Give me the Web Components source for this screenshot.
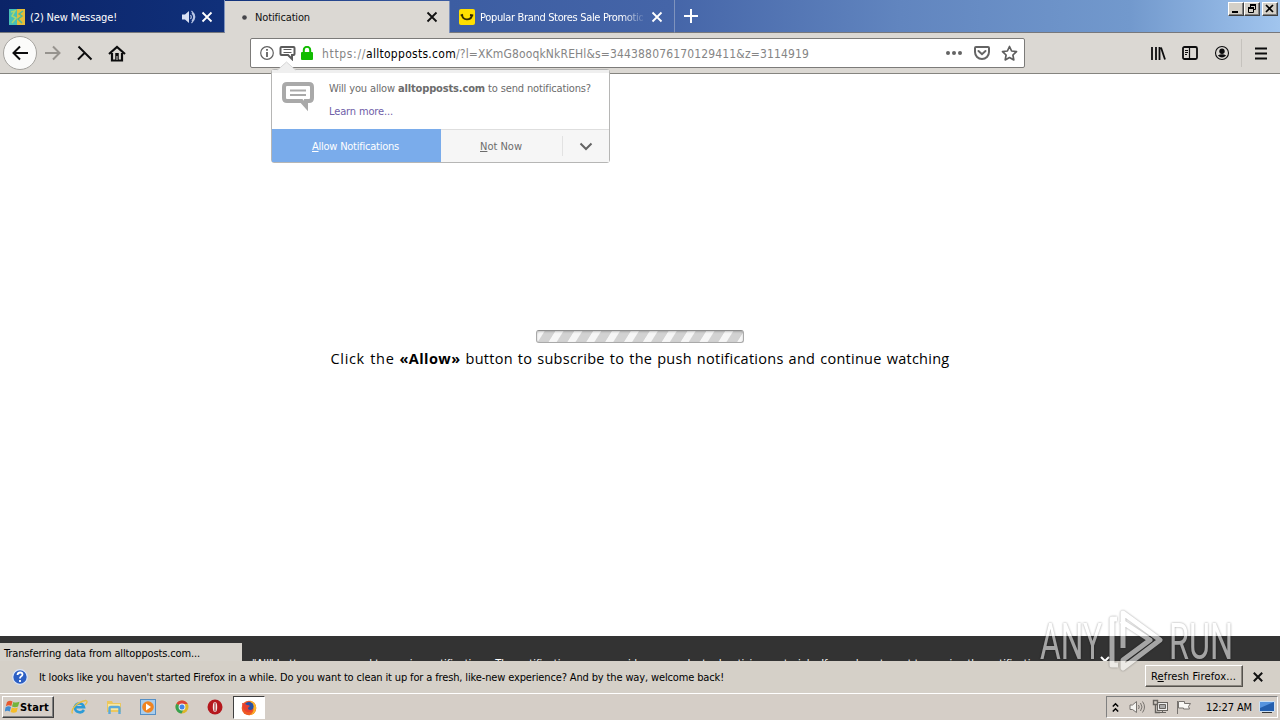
<!DOCTYPE html>
<html lang="en">
<head>
<meta charset="utf-8">
<title>Notification</title>
<style>
  body {
    margin: 0;
    width: 1280px;
    height: 720px;
    overflow: hidden;
    background: #fff;
    font-family: "DejaVu Sans Condensed", "DejaVu Sans", sans-serif;
    font-stretch: condensed;
    font-size: 11px;
    line-height: 14px;
    color: #000;
  }
</style>
</head>
<body>
<desktop-screen></desktop-screen>

<script>
class BaseElement extends HTMLElement {
  constructor() {
    super();
    const template = document.createElement("template");
    template.innerHTML = this.constructor.styles + this.constructor.markup;
    this.attachShadow({ mode: "open" });
    this.shadowRoot.appendChild(template.content.cloneNode(true));
  }
}

/* One line of text, spaced out to the number of pixels in "width". */
class FitText extends BaseElement {
  static get styles() {
    return `<style>
      :host { display: block; flex: none; white-space: nowrap; padding-top: 1px; margin-bottom: -1px; }
      span { display: inline-block; }
      ::slotted(u) { text-decoration: underline; text-underline-offset: 1px; }
    </style>`;
  }

  static get markup() {
    return `<span><slot></slot></span>`;
  }

  connectedCallback() {
    const width = Number(this.getAttribute("width"));
    const span = this.shadowRoot.querySelector("span");
    if (!width) return;
    const gap = width - span.getBoundingClientRect().width;
    span.style.letterSpacing = gap / this.textContent.length + "px";
  }
}

class BrowserTab extends BaseElement {
  static get styles() {
    return `<style>
      :host {
        display: flex;
        align-items: center;
        box-sizing: border-box;
        width: 225px;
        height: 33px;
        flex: none;
        padding: 1px 11px 0 9px;
        color: #fff;
        border-right: 1px solid #7f93bd;
        border-bottom: 1px solid #77787c;
      }
      :host([active]) {
        color: #111;
        height: 32px;
        align-self: flex-end;
        background: #dbd8d3;
        border-bottom: 0;
        padding-top: 0;
        padding-left: 17px;
      }
      .label { flex: 1; margin-left: 5px; overflow: hidden; }
      :host([fade]) .label {
        -webkit-mask-image: linear-gradient(90deg, #000 142px, transparent 166px);
        mask-image: linear-gradient(90deg, #000 142px, transparent 166px);
      }
      svg { display: block; margin-left: 8px; }
    </style>`;
  }

  static get markup() {
    return `
      <slot name="icon"></slot>
      <div class="label"><slot></slot></div>
      <slot name="sound"></slot>
      <svg width="12" height="12" viewBox="0 0 12 12"><path d="M1.5 1.5l9 9m0-9l-9 9" stroke="currentColor" stroke-width="1.8"/></svg>`;
  }
}

class WindowButtons extends BaseElement {
  static get styles() {
    return `<style>
      :host { display: flex; margin: 2px 2px 0 auto; align-self: flex-start; }
      div {
        box-sizing: border-box;
        width: 16px;
        height: 14px;
        background: #d4d0c8;
        border: 1px solid;
        border-color: #fff #404040 #404040 #fff;
        box-shadow: inset -1px -1px #808080;
      }
      div:last-child { margin-left: 2px; }
      svg { display: block; }
    </style>`;
  }

  static get markup() {
    return `
      <div><svg width="14" height="12"><path d="M3 9h6" stroke="#000" stroke-width="2"/></svg></div>
      <div><svg width="14" height="12" fill="none" stroke="#000"><path d="M5.500 4V1.500h5v5H9"/><path d="M5 2h6M3 5h6" stroke-width="2"/><path d="M3.500 4.500h5v5h-5z"/></svg></div>
      <div><svg width="14" height="12"><path d="M3 2l7 7m0-7l-7 7" stroke="#000" stroke-width="1.700"/></svg></div>`;
  }
}

class TabStrip extends BaseElement {
  static get styles() {
    return `<style>
      :host {
        display: flex;
        height: 33px;
        background: linear-gradient(90deg, #0b2468 0, #10307a 220px, #3c5da2 450px, #4565a8 670px, #6185bf 900px, #7299cd 1130px, #a1c5ee 1280px);
      }
      .plus { display: block; margin: 9px 0 0 9px; }
      .rest { display: flex; flex: 1; box-sizing: border-box; border-bottom: 1px solid #77787c; }
    </style>`;
  }

  static get markup() {
    return `
      <browser-tab>
        <svg slot="icon" width="16" height="16" viewBox="0 0 16 16">
          <path fill="#48bfb8" d="M0 0h8v16H0z"/><path fill="#e4bd38" d="M8 0h8v16H8z"/>
          <path d="M2 3l4-1-3 5 4 2-4 5" stroke="#a9d66b" stroke-width="1.500" fill="none"/>
          <path d="M14 2l-4 3 3 2-4 3 4 4" stroke="#4fb89b" stroke-width="1.500" fill="none"/>
        </svg>
        <fit-text width="87">(2) New Message!</fit-text>
        <svg slot="sound" width="14" height="14" viewBox="0 0 14 14" style="margin-right:-3px">
          <path fill="#d9e1f4" d="M0 4.500h3L7 1v12L3 9.500H0z"/>
          <path fill="none" stroke="#b8c6e6" stroke-width="1.200" d="M8.500 5q1.500 2 0 4M10 3q3.500 4 0 8M9.500 1q6.500 6 0 12"/>
        </svg>
      </browser-tab>
      <browser-tab active>
        <svg slot="icon" width="5" height="5"><circle cx="2.500" cy="2.500" r="2.300" fill="#45454a"/></svg>
        <fit-text width="55" style="margin-left:3px">Notification</fit-text>
      </browser-tab>
      <browser-tab fade>
        <svg slot="icon" width="16" height="16" viewBox="0 0 16 16">
          <rect width="16" height="16" rx="2" fill="#ffdf00"/>
          <path fill="none" stroke="#332b00" stroke-width="1.800" d="M3 5.500C3.500 12 12 12 13 6M1.700 6.500L4 5.500M11 6l3.200.500"/>
        </svg>
        <fit-text width="175">Popular Brand Stores Sale Promotions</fit-text>
      </browser-tab>
      <div class="rest">
        <svg class="plus" width="14" height="14"><path d="M7 0v14M0 7h14" stroke="#fff" stroke-width="2"/></svg>
        <window-buttons></window-buttons>
      </div>`;
  }
}

class AddressField extends BaseElement {
  static get styles() {
    return `<style>
      :host {
        display: flex;
        align-items: center;
        box-sizing: border-box;
        width: 775px;
        height: 30px;
        flex: none;
        padding: 0 6px 0 9px;
        background: #fff;
        border: 1px solid #7c7b79;
        border-radius: 2px;
        color: #858585;
        font-size: 12px;
      }
      svg { display: block; flex: none; }
      .url { display: flex; margin: 0 auto 0 9px; }
      .host { color: #000; }
    </style>`;
  }

  static get markup() {
    return `
      <svg width="14" height="14" fill="none" stroke="#616161"><circle cx="7" cy="7" r="6.300" stroke-width="1.200"/><path d="M7 6v5M7 3v1.700" stroke-width="1.800"/></svg>
      <svg width="17" height="16" viewBox="0 0 17 16" style="margin-left:5px" fill="none" stroke="#5c5c5c"><path stroke-width="2" d="M2.500 2h12q1 0 1 1v6q0 1-1 1H13v4L9 10H2.500q-1 0-1-1V3q0-1 1-1z"/><path d="M4.500 4.500h8M4.500 7.500h8"/></svg>
      <svg width="12" height="14" viewBox="0 0 12 14" style="margin-left:5px"><path d="M2.800 7V4a3.200 3.200 0 016.400 0v3" fill="none" stroke="#12bc00" stroke-width="2"/><rect y="6" width="12" height="8" rx="1" fill="#12bc00"/></svg>
      <div class="url">
        <fit-text width="44">https://</fit-text><fit-text class="host" width="90">alltopposts.com</fit-text><fit-text width="353">/?l=XKmG8ooqkNkREHl&amp;s=344388076170129411&amp;z=3114919</fit-text>
      </div>
      <svg width="16" height="6" fill="#646464"><circle cx="2" cy="3" r="2"/><circle cx="8" cy="3" r="2"/><circle cx="14" cy="3" r="2"/></svg>
      <svg width="16" height="14" viewBox="0 0 16 14" style="margin-left:12px" fill="none" stroke="#646464" stroke-width="2"><path d="M1 2q0-1 1-1h12q1 0 1 1v4a7 7 0 01-14 0z"/><path d="M4.500 5L8 8.200 11.500 5" stroke-linecap="round"/></svg>
      <svg width="17" height="17" viewBox="0 0 17 17" style="margin-left:11px"><path d="M8.500 1.500l2.100 4.500 4.900.6-3.600 3.400.9 4.900-4.300-2.400-4.300 2.400.9-4.900L1.500 6.600 6.400 6z" fill="none" stroke="#5e5e5e" stroke-width="1.700" stroke-linejoin="round"/></svg>`;
  }
}

class NavToolbar extends BaseElement {
  static get styles() {
    return `<style>
      :host {
        display: flex;
        align-items: center;
        box-sizing: border-box;
        height: 41px;
        padding: 0 12px 0 3px;
        background: #dbd8d3;
        border-bottom: 1px solid #85847f;
      }
      svg { display: block; flex: none; }
      .back {
        box-sizing: border-box;
        width: 34px;
        height: 34px;
        padding: 8px;
        border: 1px solid #a5a39f;
        border-radius: 50%;
        background: #fbfbfa;
        flex: none;
      }
      address-field { margin-left: 124px; }
      .rule { width: 1px; height: 28px; background: #c5c2bd; margin: 0 13px 0 11px; }
    </style>`;
  }

  static get markup() {
    return `
      <div class="back"><svg width="16" height="16" fill="none" stroke="#0c0c0d" stroke-width="2"><path d="M16 8H2M8 1.500L1.500 8 8 14.500"/></svg></div>
      <svg width="16" height="16" style="margin-left:8px" fill="none" stroke="#96938e" stroke-width="2"><path d="M0 8h14M8 1.500L14.500 8 8 14.500"/></svg>
      <svg width="16" height="16" style="margin-left:16px" fill="none" stroke="#0c0c0d" stroke-width="1.900"><path d="M1.500 1.500L14.500 14.500M7.500 8L1 14.500"/></svg>
      <svg width="18" height="17" viewBox="0 0 18 17" style="margin-left:15px" fill="none" stroke="#0c0c0d"><path stroke-width="2.200" d="M1 9l8-7 8 7M4 8v7.500h10V8"/><path d="M9 8v8" stroke-width="3.500"/><path d="M9 11v4" stroke="#dbd8d3" stroke-width="1"/></svg>
      <address-field></address-field>
      <svg width="16" height="14" style="margin-left:125px" fill="none" stroke="#0c0c0d" stroke-width="1.800"><path d="M2 1v13M6 1v13M9.500 1v13M11 1.500L15 13.500"/></svg>
      <svg width="16" height="14" viewBox="0 0 16 14" style="margin-left:16px" fill="none" stroke="#0c0c0d"><rect x="1" y="1" width="14" height="12" rx="1.500" stroke-width="1.800"/><path d="M7.500 1v12" stroke-width="1.200"/><path d="M3 4.500h3M3 6.500h3M3 8.500h2"/></svg>
      <svg width="16" height="16" viewBox="0 0 16 16" style="margin-left:16px"><circle cx="8" cy="8" r="6.500" fill="none" stroke="#0c0c0d" stroke-width="1.100"/><circle cx="8" cy="6.200" r="2.700" fill="#0c0c0d"/><path d="M3.800 10.500Q8 8 12.200 10.500 8 14.500 3.800 10.500z" fill="#0c0c0d"/></svg>
      <div class="rule"></div>
      <svg width="12" height="13"><path d="M0 1.500h12M0 6.500h12M0 11.500h12" stroke="#0c0c0d" stroke-width="2"/></svg>`;
  }
}

class PermissionPopup extends BaseElement {
  static get styles() {
    return `<style>
      :host {
        display: block;
        box-sizing: border-box;
        width: 339px;
        height: 94px;
        background: #fff;
        border: 1px solid #b6b6b5;
        border-radius: 3px;
        color: #6c6c6c;
      }
      .arrow { position: absolute; left: 5px; top: -9px; }
      .body { display: flex; height: 59px; border-top: 3px solid #efefef; box-sizing: border-box; }
      .icon { margin: 7px 15px 0 10px; }
      .text { padding-top: 8px; }
      .link { margin-top: 9px; color: #6f60a8; }
      .buttons { display: flex; height: 33px; }
      .allow { box-sizing: border-box; width: 169px; background: #7aaceb; color: #fff; padding: 10px 0 0 40px; }
      .not-now { box-sizing: border-box; width: 121px; padding: 9px 0 0 39px; }
      .rest { display: flex; flex: 1; background: #f6f6f6; border-top: 1px solid #dedede; }
      .more { flex: 1; border-left: 1px solid #e2e2e2; margin: 6px 0; }
      .more svg { display: block; margin: 6px 0 0 16px; }
    </style>`;
  }

  static get markup() {
    return `
      <svg class="arrow" width="20" height="10"><path d="M0 9.500L9.500 1 19 9.500" fill="#efefef" stroke="#d6d6d6"/><path d="M0 10h20" stroke="#efefef"/></svg>
      <div class="body">
        <svg class="icon" width="32" height="33" viewBox="0 0 32 33" fill="none" stroke="#a9a9a9"><path stroke-width="4" d="M5 4h22q3 0 3 3v11q0 3-3 3h-3v5l-4.500-5H5q-3 0-3-3V7q0-3 3-3z"/><path stroke-width="2" d="M8 10.500h16M8 15h16"/></svg>
        <div class="text">
          <fit-text width="262">Will you allow <b>alltopposts.com</b> to send notifications?</fit-text>
          <div class="link"><fit-text width="64">Learn more...</fit-text></div>
        </div>
      </div>
      <div class="buttons">
        <div class="allow"><fit-text width="87"><u>A</u>llow Notifications</fit-text></div>
        <div class="rest">
          <div class="not-now"><fit-text width="42"><u>N</u>ot Now</fit-text></div>
          <div class="more"><svg width="14" height="9"><path d="M1.500 1.500L7 7l5.500-5.500" fill="none" stroke="#646464" stroke-width="2"/></svg></div>
        </div>
      </div>`;
  }
}

class PageContent extends BaseElement {
  static get styles() {
    return `<style>
      :host { display: flex; flex-direction: column; align-items: center; height: 587px; background: #fff; overflow: hidden; }
      .bar {
        box-sizing: border-box;
        width: 208px;
        height: 13px;
        flex: none;
        margin-top: 256px;
        border: 1px solid #a9a9a9;
        border-top-color: #8d8d8d;
        border-radius: 3px;
        box-shadow: inset 0 1px 2px #0003;
        background: repeating-linear-gradient(122deg, #f6f6f6 0 6px, #d2d2d2 7px 15.200px, #f6f6f6 16px);
      }
      .message {
        display: flex;
        gap: 5px;
        margin-top: 4px;
        font-family: "Open Sans", sans-serif;
        font-stretch: normal;
        font-size: 14.500px;
        line-height: 21px;
        word-spacing: 1px;
      }
      .bold { font-weight: bold; }
      .consent {
        box-sizing: border-box;
        width: 100%;
        height: 25px;
        margin-top: auto;
        padding: 20px 0 0 252px;
        display: flex;
        flex: none;
        background: #333;
        color: #fff;
        overflow: hidden;
      }
      .consent svg { flex: none; margin-left: 52px; }
    </style>`;
  }

  static get markup() {
    return `
      <div class="bar"></div>
      <div class="message"><fit-text width="64">Click the</fit-text><fit-text class="bold" width="61">«Allow»</fit-text><fit-text width="484">button to subscribe to the push notifications and continue watching</fit-text></div>
      <div class="consent">
        <fit-text width="796">"All" button, you agreed to receive notifications. The notifications may provide you product advertising materials. If you do not want to receive the notifications</fit-text>
        <svg width="10" height="10"><path d="M1 1l8 8m0-8L1 9" stroke="#fff" stroke-width="2"/></svg>
      </div>`;
  }
}

class StatusPanel extends BaseElement {
  static get styles() {
    return `<style>
      :host { display: block; box-sizing: border-box; width: 242px; height: 18px; padding: 3px 0 0 4px; background: #d6d2cb; }
    </style>`;
  }

  static get markup() {
    return `<fit-text width="196"><slot></slot></fit-text>`;
  }

  connectedCallback() {
    this.shadowRoot.querySelector("fit-text").textContent = this.textContent;
  }
}

class RefreshBar extends BaseElement {
  static get styles() {
    return `<style>
      :host { display: flex; align-items: center; box-sizing: border-box; height: 32px; padding: 0 17px 0 12px; background: #d5d0c8; }
      svg { display: block; flex: none; }
      .text { margin: 0 auto 0 11px; }
      .button {
        box-sizing: border-box;
        width: 98px;
        height: 22px;
        padding: 3px 0 0 5px;
        margin: -2px 10px 0 0;
        border: 1px solid;
        border-color: #fff #55524d #55524d #fff;
        box-shadow: inset -1px -1px #8b8780;
      }
    </style>`;
  }

  static get markup() {
    return `
      <svg width="16" height="16"><circle cx="8" cy="8" r="7.300" fill="#2c5fc4" stroke="#dbe5f7" stroke-width="1.300"/><path d="M5.500 6q.3-2.500 2.700-2.500 2.300 0 2.300 2 0 1.200-1.500 2Q8 8.200 8 9.500M8 11v2" fill="none" stroke="#fff" stroke-width="1.800"/></svg>
      <div class="text"><fit-text width="685">It looks like you haven't started Firefox in a while. Do you want to clean it up for a fresh, like-new experience? And by the way, welcome back!</fit-text></div>
      <div class="button"><fit-text width="85">R<u>e</u>fresh Firefox...</fit-text></div>
      <svg width="10" height="10"><path d="M.8.8l8.400 8.400m0-8.400L.8 9.200" stroke="#111" stroke-width="2"/></svg>`;
  }
}

class TaskBar extends BaseElement {
  static get styles() {
    return `<style>
      :host { display: flex; align-items: center; box-sizing: border-box; height: 27px; padding-left: 2px; background: #d5cec7; border-top: 1px solid #fff; }
      svg { display: block; flex: none; }
      .start {
        display: flex;
        align-items: center;
        box-sizing: border-box;
        width: 52px;
        height: 22px;
        padding-left: 2px;
        border: 1px solid;
        border-color: #fff #404040 #404040 #fff;
        box-shadow: inset -1px -1px #808080;
        font-weight: bold;
      }
      .icons { display: flex; gap: 17.500px; margin-left: 17px; }
      .running {
        box-sizing: border-box;
        width: 32px;
        height: 23px;
        margin-left: 10px;
        padding: 2px 7px;
        background: #fff;
        border: 1px solid;
        border-color: #404040 #fff #fff #404040;
      }
      .tray {
        display: flex;
        align-items: center;
        box-sizing: border-box;
        width: 172px;
        height: 22px;
        margin: 0 2px 0 auto;
        padding-left: 5px;
        border: 1px solid;
        border-color: #808080 #fff #fff #808080;
      }
    </style>`;
  }

  static get markup() {
    return `
      <div class="start">
        <svg width="15" height="16" viewBox="0 0 15 16"><path fill="#e8582d" d="M2 3q3-2 5.500-.5L6.300 7Q3.500 5.500.8 7.300z"/><path fill="#73b43b" d="M8.300 3Q11 4.300 14.500 2.800L13 7.500Q10 9 7 7.500z"/><path fill="#428bd0" d="M.6 8.300Q3.500 6.600 6 8l-1.200 4.500Q2 11-.4 12.800z"/><path fill="#f6bd28" d="M6.800 8.500Q10 10 12.800 8.500l-1.200 4.600Q8.500 14.500 5.600 13z"/></svg>
        <fit-text width="29">Start</fit-text>
      </div>
      <div class="icons">
        <svg width="17" height="16" viewBox="0 0 17 16" fill="none"><path d="M13 11A5 5 0 013.800 8.300H13A4.700 4.700 0 003.800 8.300" stroke="#2c9bd6" stroke-width="2.600"/><path d="M1.500 14.500C-.5 11 5 3 15 1.500q2.500 1-1 4.500" stroke="#e7bf44" stroke-width="1.300"/></svg>
        <svg width="17" height="16" viewBox="0 0 17 16"><path fill="#ecc75e" d="M1 2h5l1 2h8v9H1z"/><path fill="#f8e7a1" d="M2 5h12v6H2z"/><path d="M3.500 15V9.500q0-1.500 1.500-1.500h7q1.500 0 1.500 1.500V15" fill="none" stroke="#5aa9da" stroke-width="2.400"/></svg>
        <svg width="16" height="16" viewBox="0 0 16 16"><rect x=".5" y=".5" width="15" height="15" fill="#a9cdec" stroke="#558fc5"/><circle cx="8" cy="8" r="5.800" fill="#f08421"/><path d="M6 4.500L11 8l-5 3.500z" fill="#fff"/></svg>
        <svg width="16" height="16" viewBox="0 0 16 16"><circle cx="8" cy="8" r="6.500" fill="#ddb62b"/><path fill="#dc4337" d="M8 8L2.400 4.700a6.500 6.500 0 0111.300.3H8z"/><path fill="#36a151" d="M2.400 4.700A6.500 6.500 0 007.500 14.500L10 9.500 8 8z"/><circle cx="8" cy="8" r="3.400" fill="#f4f4f4"/><circle cx="8" cy="8" r="2.500" fill="#4386e8"/></svg>
        <svg width="16" height="16" viewBox="0 0 16 16"><circle cx="8" cy="8" r="7.500" fill="#b5171d"/><ellipse cx="8" cy="8" rx="2.200" ry="5" fill="#f7e8e7"/><path d="M8 3.500v9" stroke="#8f1518"/></svg>
      </div>
      <div class="running"><svg width="16" height="17" viewBox="0 0 16 17"><circle cx="8" cy="9" r="7.300" fill="#ee5a24"/><path d="M9 1.500Q16 4 15 10q-1 6-7 6.300 6-3 4-8z" fill="#fbb429"/><circle cx="8" cy="7.500" r="4.600" fill="#2851a5"/><path d="M1 4q3 0 5 2 2 0 3 1-2 1-2 3 2 2 5 0-2 4-6 3-4-1-5-9z" fill="#e8402f"/></svg></div>
      <div class="tray">
        <svg width="7" height="11"><path d="M.8 4.500l2.700-2.700 2.700 2.700M.8 9.500l2.700-2.700 2.700 2.700" fill="none" stroke="#000" stroke-width="1.500"/></svg>
        <svg width="16" height="14" style="margin-left:10px" fill="#f5f4f1" stroke="#77736f"><path d="M1 5h2.500L7.500 1.500v11L3.500 9.500H1z"/><path fill="none" d="M9.500 5q1.500 2 0 4M11.500 3q3 4 0 8M13.500 1.500q4 5.500 0 11"/></svg>
        <svg width="17" height="16" style="margin-left:7px" fill="#eee" stroke="#66635f"><rect x="5.500" y="3.500" width="10" height="8"/><path fill="#aaa" d="M7.500 5.500h6v4h-6z"/><path d="M8 13.500h6M10.500 12v2"/><path d="M1.500 1.500h4v4h-4zM3.500 6v7.500H8" fill="none" stroke-width="1.400"/></svg>
        <svg width="16" height="15" style="margin-left:7px" fill="#f9f8f5" stroke="#77736f"><path d="M1.500 1v13"/><path d="M2.500 1.500h6v2h6l-2 3 1 2.500H7.500V8h-5z"/></svg>
        <div style="margin-left:14px"><fit-text width="46">12:27 AM</fit-text></div>
        <svg width="16" height="14" style="margin-left:7px"><path d="M.5 1.500h15v10H.5z" fill="#245fae" stroke="#cde0f2"/><path d="M1 2h14L1 8z" fill="#5694df"/><path d="M3 12.500h10" stroke="#333"/></svg>
      </div>`;
  }
}

class WaterMark extends BaseElement {
  static get styles() {
    return `<style>
      :host { display: block; width: 200px; height: 66px; }
      svg { display: block; overflow: visible; filter: drop-shadow(0 0 1px #000a); }
      text { font: 400 50px Roboto, sans-serif; fill: #fff; }
    </style>`;
  }

  static get markup() {
    return `
      <svg width="200" height="66" viewBox="0 0 200 66" opacity=".56">
        <text x="3" y="50" textLength="62" lengthAdjust="spacingAndGlyphs">ANY</text>
        <text x="132" y="50" textLength="64" lengthAdjust="spacingAndGlyphs">RUN</text>
        <g fill="none" stroke="#fff" stroke-width="5" stroke-linejoin="round">
          <path d="M80 10h-5v46h6"/>
          <path d="M86 39V4l37 27-37 28v-8l27-20-29-19"/>
        </g>
      </svg>`;
  }
}

class DesktopScreen extends BaseElement {
  static get styles() {
    return `<style>
      :host { display: flex; flex-direction: column; position: relative; width: 1280px; height: 720px; overflow: hidden; }
      permission-popup { position: absolute; left: 271px; top: 69px; }
      status-panel { position: absolute; left: 0; top: 643px; }
      water-mark { position: absolute; left: 1037px; top: 609px; }
    </style>`;
  }

  static get markup() {
    return `
      <tab-strip></tab-strip>
      <nav-toolbar></nav-toolbar>
      <page-content></page-content>
      <refresh-bar></refresh-bar>
      <task-bar></task-bar>
      <permission-popup></permission-popup>
      <status-panel>Transferring data from alltopposts.com...</status-panel>
      <water-mark></water-mark>`;
  }
}

customElements.define("desktop-screen", DesktopScreen);
customElements.define("tab-strip", TabStrip);
customElements.define("browser-tab", BrowserTab);
customElements.define("window-buttons", WindowButtons);
customElements.define("nav-toolbar", NavToolbar);
customElements.define("address-field", AddressField);
customElements.define("page-content", PageContent);
customElements.define("permission-popup", PermissionPopup);
customElements.define("status-panel", StatusPanel);
customElements.define("refresh-bar", RefreshBar);
customElements.define("task-bar", TaskBar);
customElements.define("water-mark", WaterMark);
// last, so that the text is measured inside the finished layout
customElements.define("fit-text", FitText);
</script>
</body>
</html>
